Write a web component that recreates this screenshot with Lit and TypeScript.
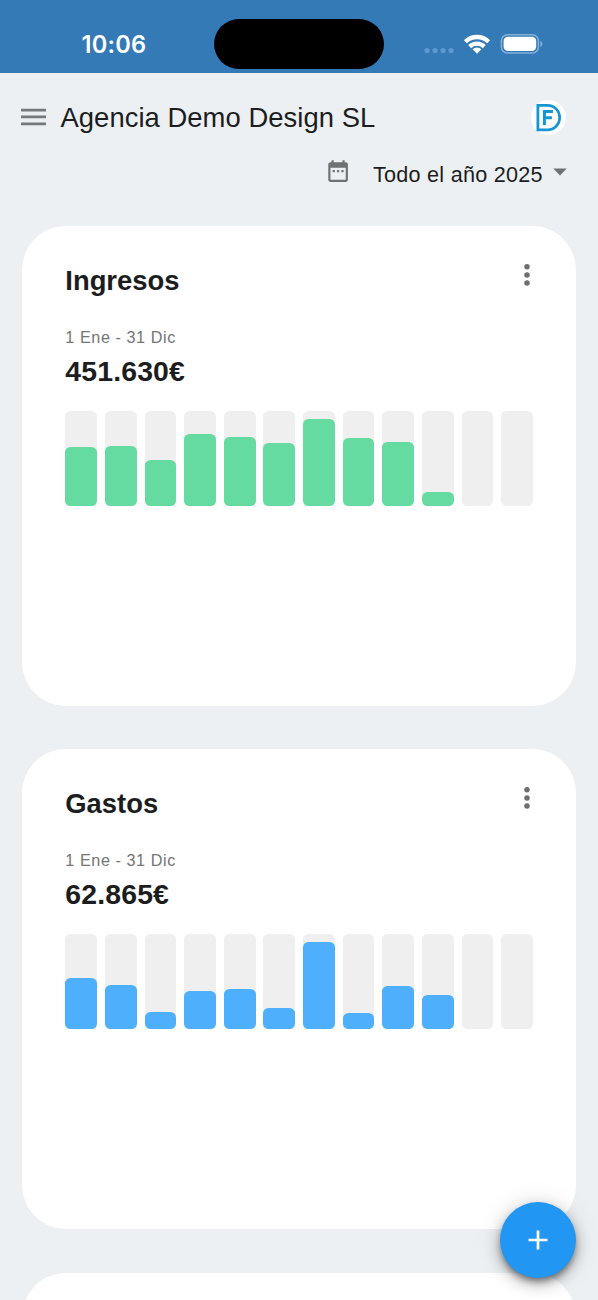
import { LitElement, html, css, svg } from "lit";
import { customElement, property } from "lit/decorators.js";

@customElement("summary-card")
class SummaryCard extends LitElement {
  @property() heading = "";
  @property() period = "";
  @property() amount = "";
  @property() color = "";
  @property({ attribute: false }) bars: number[] = [];

  static styles = css`
    :host {
      display: block;
      box-sizing: border-box;
      height: 480px;
      padding: 36px 43px 0 43.3px;
      background: #fff;
      border-radius: 44px;
    }
    .head {
      display: flex;
      justify-content: space-between;
      height: 65px;
    }
    h2 {
      margin: 0;
      padding-top: 2px;
      font-size: 27.4px;
      line-height: 34px;
      font-weight: 700;
    }
    .more {
      width: 6px;
      height: 24px;
      margin: 1px 3px 0 0;
      fill: #6e6e6e;
    }
    .period {
      font-size: 16.2px;
      line-height: 20px;
      letter-spacing: 0.57px;
      color: #757575;
    }
    .amount {
      font-size: 28.4px;
      line-height: 34px;
      font-weight: 700;
      letter-spacing: 0.16px;
      margin-top: 7px;
    }
    .chart {
      display: grid;
      grid-template-columns: repeat(12, 1fr);
      column-gap: 7.9px;
      height: 95px;
      margin-top: 23px;
    }
    .track {
      display: flex;
      align-items: flex-end;
      background: #efefef;
      border-radius: 5.5px;
    }
    .fill {
      width: 100%;
      border-radius: 5.5px;
    }
  `;

  render() {
    return html`
      <div class="head">
        <h2>${this.heading}</h2>
        <svg class="more" viewBox="0 0 6 24">
          <circle cx="3" cy="3.8" r="2.75" />
          <circle cx="3" cy="11.9" r="2.75" />
          <circle cx="3" cy="20" r="2.75" />
        </svg>
      </div>
      <div class="period">${this.period}</div>
      <div class="amount">${this.amount}</div>
      <div class="chart">
        ${this.bars.map(
          (h) => html`<div class="track">
            ${h
              ? html`<div class="fill" style="height:${h}px;background:${this.color}"></div>`
              : null}
          </div>`
        )}
      </div>
    `;
  }
}

@customElement("app-root")
class AppRoot extends LitElement {
  static styles = css`
    :host {
      display: block;
      position: relative;
      width: 598px;
      height: 1300px;
      overflow: hidden;
      background: #ecf0f3;
      color: #1c1d1e;
      font-family: "Liberation Sans", Arial, sans-serif;
    }
    .status {
      display: grid;
      grid-template-columns: 214px 170px 1fr;
      height: 73.4px;
      background: #337ab7;
    }
    .time {
      padding: 30px 0 0 81.5px;
      font: 600 23.6px/30px Inter, sans-serif;
      letter-spacing: 0.2px;
      color: #fff;
    }
    .island {
      height: 50px;
      margin-top: 19px;
      border-radius: 25px;
      background: #000;
    }
    .signals {
      width: 122px;
      height: 24px;
      margin: 32px 0 0 38px;
    }
    .bar {
      display: flex;
      align-items: center;
      height: 44px;
      padding: 22.6px 32.5px 0 20.5px;
    }
    .menu {
      width: 25px;
      height: 18px;
      margin-top: -1px;
      fill: #76787a;
    }
    h1 {
      flex: 1;
      margin: 0 0 0 15px;
      font-size: 27.4px;
      line-height: 36px;
      font-weight: 400;
      letter-spacing: 0.05px;
    }
    .logo {
      width: 35px;
      height: 35px;
    }
    .filter {
      display: flex;
      justify-content: flex-end;
      height: 49px;
      margin-top: 17px;
      padding-right: 31px;
      font-size: 21.6px;
      letter-spacing: 0.25px;
      line-height: 36px;
    }
    .calendar {
      width: 26.2px;
      height: 26.2px;
      margin: 1px 22px 0 0;
      fill: #6f7173;
    }
    .caret {
      width: 14px;
      height: 8px;
      margin: 11px 0 0 10px;
      fill: #6f7173;
    }
    .filter span {
      width: 170px;
      white-space: nowrap;
    }
    .cards {
      display: grid;
      row-gap: 43.4px;
      padding: 20px 22px 0;
    }
    .fab {
      position: absolute;
      left: 499.8px;
      top: 1201.8px;
      display: grid;
      place-items: center;
      width: 76.2px;
      height: 76.2px;
      border: 0;
      padding: 0;
      border-radius: 50%;
      background: #2196f3;
      box-shadow: 0 4.6px 7.6px -1.5px rgba(0, 0, 0, 0.45),
        0 6px 15px rgba(0, 0, 0, 0.24), 0 1.5px 27px rgba(0, 0, 0, 0.12);
    }
    .fab svg {
      width: 20px;
      height: 20px;
      stroke: #fff;
      stroke-width: 2.7;
    }
  `;

  render() {
    return html`
      <div class="status">
        <div class="time">10:06</div>
        <div class="island"></div>
        <svg class="signals" viewBox="422 32 122 24">
          <g fill="#5f97cf">
            ${[427, 435, 443, 451].map((x) => svg`<circle cx=${x} cy="50.6" r="2.6" />`)}
          </g>
          <g fill="none" stroke="#fff" stroke-width="4.3">
            <path d="M465.4 41.7a16.7 16.7 0 0 1 23.2 0" />
            <path d="M469.7 46.6a10.4 10.4 0 0 1 14.6 0" />
          </g>
          <path d="M472.6 49.3a6.3 6.3 0 0 1 8.8 0L477 53.7z" fill="#fff" />
          <rect x="501.4" y="34.7" width="37" height="18.4" rx="6" fill="none" stroke="#85b0d8" stroke-width="1.5" />
          <rect x="503.6" y="36.8" width="32.6" height="14.2" rx="4.2" fill="#fff" />
          <path d="M540.3 41v5.8c1.4-.5 2.1-1.6 2.1-2.9s-.7-2.4-2.1-2.9z" fill="#85b0d8" />
        </svg>
      </div>
      <div class="bar">
        <svg class="menu" viewBox="0 0 25 18">
          <path d="M0 .7h25v2.7H0zM0 7.6h25v2.7H0zM0 14.5h25v2.7H0z" />
        </svg>
        <h1>Agencia Demo Design SL</h1>
        <svg class="logo" viewBox="530.5 99.8 35 35">
          <circle cx="548" cy="117.3" r="17.5" fill="#fff" />
          <g fill="none" stroke="#1596d3">
            <path stroke-width="2.8" d="M537.4 105.1h9.700a12 12.2 0 0 1 0 24.5h-9.700z" />
            <path stroke-width="3" d="M552.4 111.3h-8.500v13.400M544 117.5h7.400" />
          </g>
        </svg>
      </div>
      <div class="filter">
        <svg class="calendar" viewBox="0 0 24 24">
          <path
            d="M9 11H7v2h2v-2zm4 0h-2v2h2v-2zm4 0h-2v2h2v-2zm2-7h-1V2h-2v2H8V2H6v2H5c-1.11 0-1.99.9-1.99 2L3 20c0 1.1.89 2 2 2h14c1.1 0 2-.9 2-2V6c0-1.1-.9-2-2-2zm0 16H5V9h14v11z"
          />
        </svg>
        <span>Todo el año 2025</span>
        <svg class="caret" viewBox="0 0 14 8"><path d="M.3.5h13.4L7 7.4z" /></svg>
      </div>
      <div class="cards">
        <summary-card
          heading="Ingresos"
          period="1 Ene - 31 Dic"
          amount="451.630€"
          color="#66dba1"
          .bars=${[58.7, 59.7, 46, 72, 69.4, 62.5, 87, 68, 64, 14, 0, 0]}
        ></summary-card>
        <summary-card
          heading="Gastos"
          period="1 Ene - 31 Dic"
          amount="62.865€"
          color="#4eaffc"
          .bars=${[51.7, 44.7, 17.7, 38, 40.7, 21.7, 87, 16, 43.4, 34, 0, 0]}
        ></summary-card>
        <summary-card></summary-card>
      </div>
      <button class="fab" aria-label="Añadir">
        <svg viewBox="0 0 20 20"><path d="M10 .5v19M.5 10h19" /></svg>
      </button>
    `;
  }
}
